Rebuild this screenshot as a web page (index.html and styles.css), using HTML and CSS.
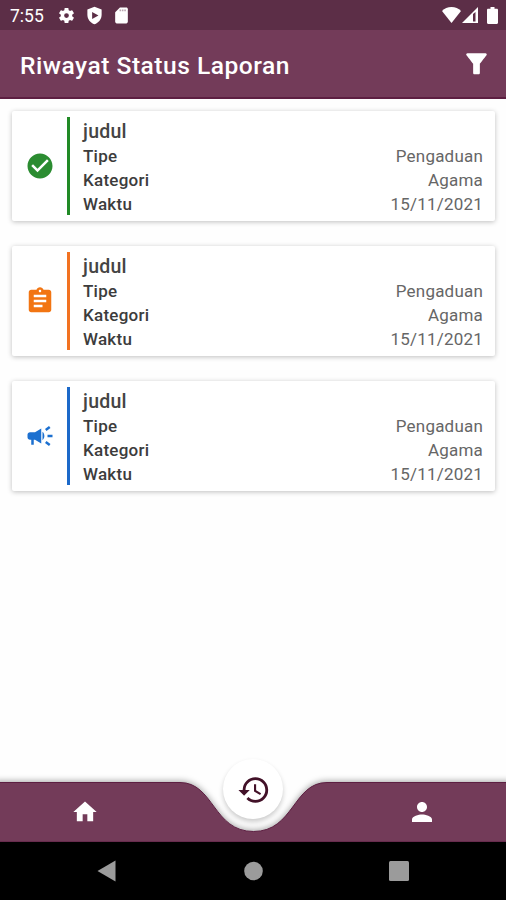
FILE: index.html
```html
<!DOCTYPE html>
<html lang="id">
<head>
    <meta charset="UTF-8">
    <meta name="viewport" content="width=device-width, initial-scale=1.0">
    <title>Riwayat Status Laporan</title>
    <link rel="stylesheet" href="styles.css">
</head>
<body>

    <!-- Status bar -->
    <div class="status-bar">
        <span class="jam">7:55</span>
        <div class="status-kiri">
            <svg width="19" height="19" viewBox="0 0 24 24"><path d="M19.14 12.94c.04-.3.06-.61.06-.94 0-.32-.02-.64-.07-.94l2.03-1.58a.49.49 0 0 0 .12-.61l-1.92-3.32a.49.49 0 0 0-.59-.22l-2.39.96c-.5-.38-1.03-.7-1.62-.94l-.36-2.54a.48.48 0 0 0-.48-.41h-3.84c-.24 0-.43.17-.47.41l-.36 2.54c-.59.24-1.13.57-1.62.94l-2.39-.96a.48.48 0 0 0-.59.22L2.74 8.87c-.12.21-.08.47.12.61l2.03 1.58c-.05.3-.09.63-.09.94s.02.64.07.94l-2.03 1.58a.49.49 0 0 0-.12.61l1.92 3.32c.12.22.37.29.59.22l2.39-.96c.5.38 1.03.7 1.62.94l.36 2.54c.05.24.24.41.48.41h3.84c.24 0 .44-.17.47-.41l.36-2.54c.59-.24 1.13-.56 1.62-.94l2.39.96c.22.08.47 0 .59-.22l1.92-3.32a.49.49 0 0 0-.12-.61l-2.01-1.58zM12 15a3 3 0 1 1 0-6 3 3 0 0 1 0 6z"/></svg>
            <svg width="19" height="19" viewBox="0 0 24 24"><path fill-rule="evenodd" d="M12 1 3 4.500V11c0 5.500 3.800 10.300 9 12 5.200-1.700 9-6.500 9-12V4.500zM9 7.500v9l8-4.500z"/></svg>
            <svg width="19" height="19" viewBox="0 0 24 24"><path d="M18 2h-8L4 8v12c0 1.100.9 2 2 2h12c1.100 0 2-.9 2-2V4c0-1.100-.9-2-2-2z"/><path class="kontak" d="M9.500 4.500h2v2h-2zM12.500 4.500h2v2h-2zM15.500 4.500h2v2h-2z"/></svg>
        </div>
        <div class="status-kanan">
            <svg width="19" height="16" viewBox="0 0 19 16"><path d="M9.500 0C5.700 0 2.400 1.500 0 4l9.500 12L19 4C16.600 1.500 13.300 0 9.500 0z"/></svg>
            <svg width="16" height="16" viewBox="0 0 16 16"><path fill-rule="evenodd" d="M0 16 16 0v16zM11 7v7.500h2.500V5z"/></svg>
            <svg class="baterai" width="11" height="17" viewBox="0 0 11 17"><path d="M3.500 0h4v1.800h2.300c.7 0 1.200.5 1.200 1.200v12.800c0 .7-.5 1.200-1.200 1.200H1.200C.5 17 0 16.500 0 15.800V3c0-.7.5-1.200 1.200-1.200h2.300z"/></svg>
        </div>
    </div>

    <header class="app-bar">
        <h1>Riwayat Status Laporan</h1>
        <svg width="31" height="31" viewBox="0 0 24 24"><path d="M4.250 5.610C6.200 8.100 9.400 12.200 9.400 12.200V19.300c0 .55.45 1 1 1h3.200c.55 0 1-.45 1-1v-7.100s3.200-4.100 5.140-6.590A.998.998 0 0 0 18.950 4H5.040c-.83 0-1.300.95-.79 1.610z"/></svg>
    </header>

    <!-- Daftar laporan -->
    <main class="daftar">
        <article class="kartu selesai">
            <div class="ikon">
                <svg width="30" height="30" viewBox="0 0 24 24"><path d="M12 2C6.480 2 2 6.480 2 12s4.480 10 10 10 10-4.480 10-10S17.520 2 12 2zm-2 15-5-5 1.410-1.410L10 14.170l7.590-7.590L19 8l-9 9z"/></svg>
            </div>
            <div class="isi">
                <h2>judul</h2>
                <dl>
                    <div><dt>Tipe</dt><dd>Pengaduan</dd></div>
                    <div><dt>Kategori</dt><dd>Agama</dd></div>
                    <div><dt>Waktu</dt><dd class="tanggal">15/11/2021</dd></div>
                </dl>
            </div>
        </article>

        <article class="kartu proses">
            <div class="ikon">
                <svg width="30" height="30" viewBox="0 0 24 24"><path d="M19 3h-4.180C14.400 1.840 13.300 1 12 1s-2.400.84-2.820 2H5c-1.100 0-2 .9-2 2v14c0 1.100.9 2 2 2h14c1.100 0 2-.9 2-2V5c0-1.100-.9-2-2-2zm-7 0c.55 0 1 .45 1 1s-.45 1-1 1-1-.45-1-1 .45-1 1-1zm2 14H7v-2h7v2zm3-4H7v-2h10v2zm0-4H7V7h10v2z"/></svg>
            </div>
            <div class="isi">
                <h2>judul</h2>
                <dl>
                    <div><dt>Tipe</dt><dd>Pengaduan</dd></div>
                    <div><dt>Kategori</dt><dd>Agama</dd></div>
                    <div><dt>Waktu</dt><dd class="tanggal">15/11/2021</dd></div>
                </dl>
            </div>
        </article>

        <article class="kartu terkirim">
            <div class="ikon">
                <svg width="30" height="30" viewBox="0 0 24 24"><path d="M18 11v2h4v-2h-4zM16 17.610c.96.71 2.210 1.650 3.200 2.390.4-.53.8-1.070 1.200-1.600-.99-.74-2.240-1.680-3.200-2.400-.4.540-.8 1.080-1.200 1.610zM20.400 5.600c-.4-.53-.8-1.070-1.200-1.600-.99.740-2.240 1.680-3.200 2.400.4.530.8 1.070 1.200 1.600.96-.72 2.210-1.650 3.200-2.400zM4 9c-1.100 0-2 .9-2 2v2c0 1.100.9 2 2 2h1v4h2v-4h1l5 3V6L8 9H4zm11.500 3c0-1.330-.58-2.530-1.500-3.350v6.690c.92-.81 1.500-2.010 1.500-3.340z"/></svg>
            </div>
            <div class="isi">
                <h2>judul</h2>
                <dl>
                    <div><dt>Tipe</dt><dd>Pengaduan</dd></div>
                    <div><dt>Kategori</dt><dd>Agama</dd></div>
                    <div><dt>Waktu</dt><dd class="tanggal">15/11/2021</dd></div>
                </dl>
            </div>
        </article>
    </main>

    <!-- Navigasi bawah -->
    <nav class="nav-bawah">
        <svg class="lengkung" width="506" height="60" viewBox="0 0 506 60"><path d="M-5 .5H180C214 .5 213 49.500 253.500 49.500S293 .5 327 .5H511V60H-5z"/></svg>
        <a class="menu"><svg width="28" height="28" viewBox="0 0 24 24"><path d="M10 20v-6h4v6h5v-8h3L12 3 2 12h3v8z"/></svg></a>
        <a class="menu aktif"><svg width="34" height="34" viewBox="0 0 24 24"><path d="M13 3a9 9 0 0 0-9 9H1l3.890 3.890.07.14L9 12H6c0-3.870 3.130-7 7-7s7 3.130 7 7-3.130 7-7 7c-1.930 0-3.680-.79-4.940-2.060l-1.420 1.420A8.954 8.954 0 0 0 13 21a9 9 0 0 0 0-18zm-1 5v5l4.280 2.540.72-1.210-3.500-2.080V8H12z"/></svg></a>
        <a class="menu"><svg width="30" height="30" viewBox="0 0 24 24"><path d="M12 12c2.210 0 4-1.790 4-4s-1.790-4-4-4-4 1.790-4 4 1.790 4 4 4zm0 2c-2.670 0-8 1.340-8 4v2h16v-2c0-2.660-5.330-4-8-4z"/></svg></a>
    </nav>

    <!-- Tombol sistem -->
    <div class="nav-sistem">
        <svg width="20" height="22" viewBox="0 0 20 22"><path d="M18.500.5v21L.5 11z"/></svg>
        <svg width="20" height="20" viewBox="0 0 20 20"><circle cx="10.500" cy="10" r="9.300"/></svg>
        <svg width="20" height="20" viewBox="0 0 20 20"><rect width="20" height="20" rx="1.500"/></svg>
    </div>

</body>
</html>
```
FILE: styles.css
```css
body {
    display: flex;
    flex-direction: column;
    height: 900px;
    width: 506px;
    margin: 0;
    overflow: hidden;
    font-family: Roboto, 'Liberation Sans', sans-serif;
    background-color: #fefefe;
}

svg {
    display: block;
    fill: #fff;
}

.status-bar {
    display: flex;
    align-items: center;
    box-sizing: border-box;
    height: 30px;
    padding: 0 8px 0 10px;
    background-color: #5c2e47;
    color: #fff;
}

.jam {
    width: 47px;
    font-size: 17.5px;
    line-height: 30px;
    padding-top: 2px;
}

.status-kiri {
    display: flex;
    gap: 8.5px;
}

.kontak {
    fill: #b9a5b0;
}

.status-kanan {
    display: flex;
    align-items: center;
    margin-left: auto;
    gap: 1px;
}

.baterai {
    margin-left: 8px;
}

.app-bar {
    display: flex;
    justify-content: space-between;
    align-items: center;
    box-sizing: border-box;
    height: 69px;
    padding: 0 14px 0 20px;
    background-color: #733b59;
    border-bottom: 2px solid #5d1f42;
}

.app-bar h1 {
    margin: 4px 0 0;
    color: #fff;
    font-size: 24.6px;
    font-weight: 500;
    letter-spacing: 0.5px;
}

.daftar {
    flex: 1;
    display: flex;
    flex-direction: column;
    gap: 25px;
    padding: 12px 11px 0 12px;
}

.kartu {
    display: flex;
    align-items: center;
    box-sizing: border-box;
    height: 110px;
    background-color: #fff;
    border-radius: 2px;
    box-shadow: 0 1px 5px rgba(0, 0, 0, 0.25);
}

.ikon {
    display: flex;
    justify-content: center;
    width: 55px;
}

.isi {
    flex: 1;
    box-sizing: border-box;
    height: 98px;
    padding: 3px 12px 0 13px;
    border-left: 3px solid;
}

.selesai .isi {
    border-color: #218a26;
}

.selesai svg {
    fill: #2b8c31;
}

.proses .isi {
    border-color: #f27221;
}

.proses svg {
    fill: #f27512;
}

.terkirim .isi {
    border-color: #1c69c9;
}

.terkirim svg {
    fill: #1c70d0;
}

.isi h2 {
    margin: 0;
    color: #444;
    font-size: 19.5px;
    font-weight: 500;
    line-height: 24px;
    letter-spacing: 0.25px;
}

dl {
    margin: 0;
}

dl div {
    display: flex;
    justify-content: space-between;
    font-size: 17px;
    line-height: 24px;
}

dt {
    color: #3c3c3c;
    font-weight: 500;
    letter-spacing: 0.25px;
}

dd {
    margin: 0;
    color: #666;
    letter-spacing: 0.2px;
}

.nav-bawah {
    position: relative;
    display: flex;
    height: 60px;
}

/* bar dengan lekukan di belakang menu */
.lengkung {
    position: absolute;
    top: 0;
    left: 0;
    overflow: visible;
    fill: #733b59;
    stroke: #5d1f42;
    filter: drop-shadow(0 -1px 3px rgba(0, 0, 0, 0.35));
}

.menu {
    position: relative;
    flex: 1;
    display: flex;
    justify-content: center;
    align-items: center;
}

.menu.aktif {
    flex: none;
    width: 60px;
    height: 60px;
    margin: -23px 54px 0;
    border-radius: 50%;
    background-color: #fff;
    box-shadow: 0 3px 5px rgba(0, 0, 0, 0.2);
}

.menu.aktif svg {
    margin: 1px 0 0 2px;
    fill: #421128;
}

.nav-sistem {
    position: relative;
    display: flex;
    justify-content: center;
    align-items: center;
    gap: 126px;
    height: 58px;
    background-color: #000;
}

.nav-sistem svg {
    fill: #9b9b9b;
}
```
